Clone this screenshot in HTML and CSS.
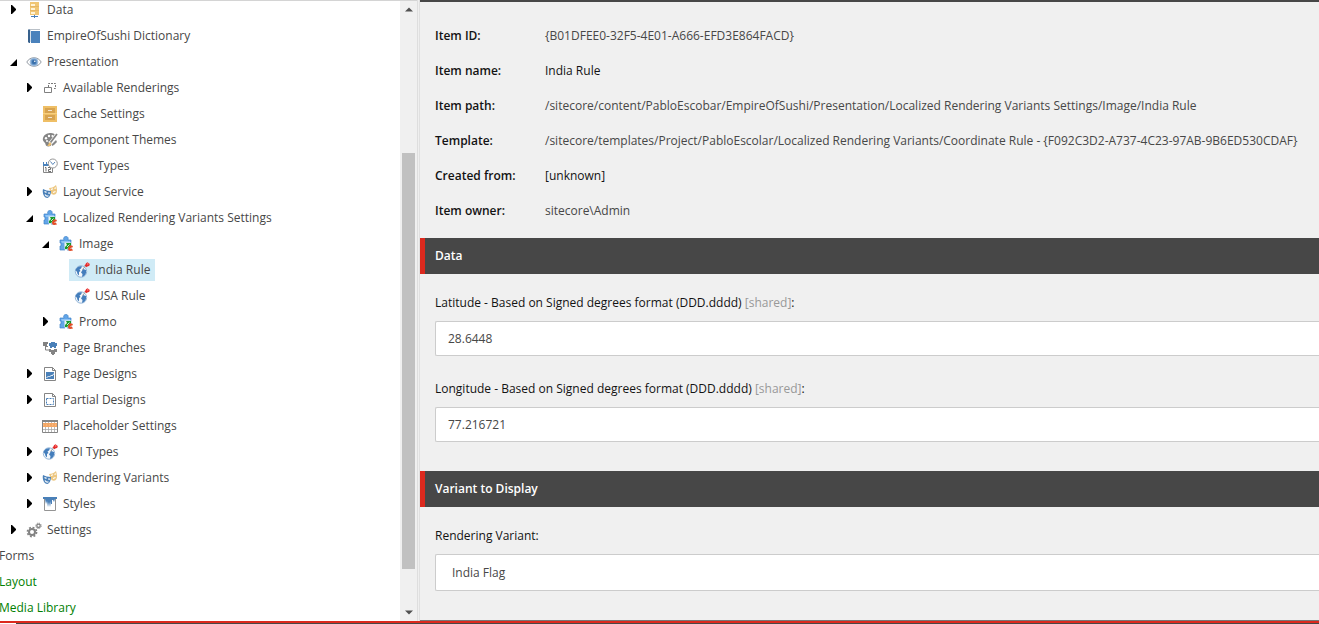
FILE: index.html
```html
<!DOCTYPE html>
<html lang="en">
<head>
<meta charset="utf-8">
<title>Content Editor</title>
<link rel="stylesheet" href="styles.css">
</head>
<body>
<svg class="sprites" width="0" height="0">
  <symbol id="closed" viewBox="0 0 8 10"><path d="M2 0h1l4 4v1L3 9H2z" fill="#000"/></symbol>
  <symbol id="open" viewBox="0 0 8 10"><path d="M8 2v7H1z" fill="#000"/></symbol>
  <symbol id="data" viewBox="0 0 16 16"><path d="M4 0h9v13H4z" fill="#f0c674"/><path d="M5 2h4v2H5zM5 6h4v2H5zM5 10h4v2H5z" fill="#fff3d6"/><path d="M4 4.500h9M4 8.500h9" stroke="#e6b765"/><path d="M8 13h1v1h3v1H9v1H8v-1H5v-1h3z" fill="#4a80b8"/></symbol>
  <symbol id="book" viewBox="0 0 16 16"><path d="M3.500 1.500h10.500" stroke="#b9c0c7"/><path d="M5 3h9v12H5z" fill="#4a82bc"/><path d="M2 2l1-1 1 1v13H3l-1-1z" fill="#38618d"/><path d="M4.500 2v12" stroke="#d5e0eb"/></symbol>
  <symbol id="eye" viewBox="0 0 16 16"><path d="M.8 8C4 2.300 12 2.300 15.200 8 12 13.700 4 13.700 .8 8z" fill="#fff" stroke="#949ba3" stroke-width="1"/><circle cx="8" cy="8" r="3.900" fill="#6c9bcd" stroke="#a6c1de"/><circle cx="8" cy="8" r="2.200" fill="#3c71ab"/><circle cx="8.800" cy="7.200" r=".8" fill="#fff"/></symbol>
  <symbol id="rend" viewBox="0 0 16 16"><path d="M6.500 7V3.500H13.500v5H11" fill="none" stroke="#777" stroke-dasharray="2 1"/><path d="M2.500 7.500h7v5h-7z" fill="#fff" stroke="#808080"/></symbol>
  <symbol id="cabinet" viewBox="0 0 16 16"><path d="M1 0h14v16H1z" fill="#efbf66"/><path d="M3 2h10v5H3zM3 9h10v5H3z" fill="#d7a350"/><path d="M1 7.500h14" stroke="#f8cf7d"/><path d="M6 4h4v1H6zM6 11h4v1H6z" fill="#f3e5cf"/></symbol>
  <symbol id="palette" viewBox="0 0 16 16"><path d="M1 6C2 2 6 1 9 1c4 0 5 3 4 5L9.500 9c-1 2 1 4-1 5-3 1-5 0-5-2C3 10 0 9 1 6z" fill="#858585"/><g fill="#fff"><circle cx="4" cy="6.200" r="1.200"/><circle cx="7" cy="4" r="1.200"/><circle cx="10.500" cy="4" r="1.100"/><circle cx="5" cy="9" r="1"/></g><path d="M15 2L9 10l-2 1" fill="none" stroke="#fff" stroke-width="3"/><path d="M15 2L8.500 10.500" stroke="#858585" stroke-width="1.800"/><path d="M8 10l1.500 2L8 14H5c2-1 1-3 3-4z" fill="#e9bd70"/><path d="M10 12l4-4 1 2-3 3-2 1z" fill="#888"/></symbol>
  <symbol id="event" viewBox="0 0 16 16"><path d="M1.500 6.500h9v8h-9z" fill="#fff" stroke="#858585"/><path d="M1 4h1v2h2V4h1v2h3v2H1z" fill="#4a82bc"/><path d="M3 9.500h1v4M6 9.500h2.500v2H6.500v2H9" fill="none" stroke="#707070"/><circle cx="10.800" cy="5.500" r="4.500" fill="#fff" stroke="#969696"/><path d="M8.500 3.500l2.300 3L13 4" fill="none" stroke="#5c88b8"/></symbol>
  <symbol id="masks" viewBox="0 0 16 16"><path d="M7 4c3 0 5-1 7-3 1 3 1.500 6 .5 8-1 2-3 2-5 1z" fill="#edc780"/><path d="M9 5.500l2-.7M12.500 4.500l1.500-.7M11 8.500l2.500-1" stroke="#fff" stroke-width="1.200"/><path d="M1 5c2 1 5 2 8 2 0 3-1 6-3.500 7C2 14 0 9 1 5z" fill="#4a80b8"/><path d="M2.500 7.500l2 .9M6 9l2 .2M3 10.500c1 1.500 2 2 3.500 1.300" fill="none" stroke="#fff" stroke-width="1.200"/></symbol>
  <symbol id="puzzle" viewBox="0 0 16 16"><path d="M2 4h4c-1-2 0-3.500 2-3.500S10.500 2 10 4h3v10H9v-3H7v3H2v-4h1V7H2z" fill="#62a5e8" stroke="#4185ca" stroke-width=".7"/><path d="M3 5h9v2H4z" fill="#8fc4f5"/><path d="M6.500 6.500h7v7h-7z" fill="#eef6ec"/><path d="M7 13v-2l2-2-1-2h5v5l-1.500-1.500L9 13z" fill="#169b2b"/><path d="M10 13c0-2 1-3 2-3l-.5-1L15 10l-1 2-.7-.7-1 1.700h1.200v-1l1.500 2.500L12 15l-1.500-.5z" fill="#e44c25"/><path d="M9 11l2.500-2.500" stroke="#fff" stroke-width=".8"/></symbol>
  <symbol id="globe" viewBox="0 0 16 16"><circle cx="7" cy="9.500" r="5.700" fill="#f3f7fb" stroke="#7ca4ce" stroke-width=".8"/><path d="M1.500 8C3 4.500 6 4 8 4.500L7 6.500 5.500 7.500 6.500 9 5 10v3.500L3.500 12 3 10zM9 7l3 1v3c-.5 2-2 3-4 4l.5-3L7 10.500z" fill="#447ebc"/><path d="M8.500 7.500l3.500-4" stroke="#999"/><path d="M10.300 3.300l1.200-.8.5-1.300L13.500.3 15.800 2l-.6 2-1.500.3-1 1z" fill="#e52b2b"/><circle cx="13.800" cy="2" r=".7" fill="#ff9b94"/></symbol>
  <symbol id="branches" viewBox="0 0 16 16"><path d="M1 2h5v2H5v2h1v1H3V6H1z" fill="#828282"/><path d="M7 3h2V2h4v1h2v3h-1v2h-2V7h-2v1H8V6H7z" fill="#4a80b8"/><path d="M3.500 7v3H7" fill="none" stroke="#828282"/><path d="M7 9h2v1h3V9h3v3h-2v2h-1v1h-2v-1H9v-2H7z" fill="#848484"/></symbol>
  <symbol id="page" viewBox="0 0 16 16"><path d="M2.500 1.500h8l3 3v10h-11z" fill="#fff" stroke="#858585"/><path d="M10.500 1.500v3h3" fill="none" stroke="#858585"/></symbol>
  <symbol id="design" viewBox="0 0 16 16"><use href="#page"/><path d="M4 6h8v7H4z" fill="#4a80b8"/><path d="M4.500 12l2-2 1 1 2-2 .5 1L12 7.500" fill="none" stroke="#fff" stroke-width=".9"/></symbol>
  <symbol id="partial" viewBox="0 0 16 16"><use href="#page"/><path d="M4.500 6.500h7v6h-7z" fill="none" stroke="#4a80b8" stroke-dasharray="2 1"/></symbol>
  <symbol id="grid" viewBox="0 0 16 16"><path d="M.5 2.500h15v12H.5z" fill="#fff" stroke="#858585"/><path d="M0 2h16v2H0z" fill="#858585"/><path d="M3.500 4v10M6.500 4v10M9.500 4v10M12.500 4v10M1 11.500h14" stroke="#aaa" stroke-width=".8"/><path d="M1 5h14v4H1z" fill="#f4a765"/><path d="M1 7h14" stroke="#f8c496" stroke-dasharray="1 2"/></symbol>
  <symbol id="styles" viewBox="0 0 16 16"><path d="M2.500 3v11.500h11V3" fill="#fff" stroke="#949494"/><path d="M1 1h14v2h-2l-1 3-1-2h-1v4H9V5L8 11 7 6 6 11 5 5 4 8 3 3H1z" fill="#4a80b8"/></symbol>
  <symbol id="gears" viewBox="0 0 16 16"><circle cx="6" cy="10" r="3" fill="none" stroke="#828282" stroke-width="2"/><circle cx="6" cy="10" r="4.600" fill="none" stroke="#828282" stroke-width="1.600" stroke-dasharray="1.900 1.713"/><circle cx="12.500" cy="3.800" r="1.700" fill="none" stroke="#828282" stroke-width="1.300"/><circle cx="12.500" cy="3.800" r="2.700" fill="none" stroke="#828282" stroke-dasharray="1.120 1"/></symbol>
</svg>
<div class="app">
  <main class="workspace">
    <nav class="tree">
      <div class="node l0"><svg class="arrow"><use href="#closed"/></svg><span class="item"><svg class="icon"><use href="#data"/></svg>Data</span></div>
      <div class="node l0"><i class="arrow"></i><span class="item"><svg class="icon"><use href="#book"/></svg>EmpireOfSushi Dictionary</span></div>
      <div class="node l0"><svg class="arrow"><use href="#open"/></svg><span class="item"><svg class="icon"><use href="#eye"/></svg>Presentation</span></div>
      <div class="node l1"><svg class="arrow"><use href="#closed"/></svg><span class="item"><svg class="icon"><use href="#rend"/></svg>Available Renderings</span></div>
      <div class="node l1"><i class="arrow"></i><span class="item"><svg class="icon"><use href="#cabinet"/></svg>Cache Settings</span></div>
      <div class="node l1"><i class="arrow"></i><span class="item"><svg class="icon"><use href="#palette"/></svg>Component Themes</span></div>
      <div class="node l1"><i class="arrow"></i><span class="item"><svg class="icon"><use href="#event"/></svg>Event Types</span></div>
      <div class="node l1"><svg class="arrow"><use href="#closed"/></svg><span class="item"><svg class="icon"><use href="#masks"/></svg>Layout Service</span></div>
      <div class="node l1"><svg class="arrow"><use href="#open"/></svg><span class="item"><svg class="icon"><use href="#puzzle"/></svg>Localized Rendering Variants Settings</span></div>
      <div class="node l2"><svg class="arrow"><use href="#open"/></svg><span class="item"><svg class="icon"><use href="#puzzle"/></svg>Image</span></div>
      <div class="node l3"><i class="arrow"></i><span class="item selected"><svg class="icon"><use href="#globe"/></svg>India Rule</span></div>
      <div class="node l3"><i class="arrow"></i><span class="item"><svg class="icon"><use href="#globe"/></svg>USA Rule</span></div>
      <div class="node l2"><svg class="arrow"><use href="#closed"/></svg><span class="item"><svg class="icon"><use href="#puzzle"/></svg>Promo</span></div>
      <div class="node l1"><i class="arrow"></i><span class="item"><svg class="icon"><use href="#branches"/></svg>Page Branches</span></div>
      <div class="node l1"><svg class="arrow"><use href="#closed"/></svg><span class="item"><svg class="icon"><use href="#design"/></svg>Page Designs</span></div>
      <div class="node l1"><svg class="arrow"><use href="#closed"/></svg><span class="item"><svg class="icon"><use href="#partial"/></svg>Partial Designs</span></div>
      <div class="node l1"><i class="arrow"></i><span class="item"><svg class="icon"><use href="#grid"/></svg>Placeholder Settings</span></div>
      <div class="node l1"><svg class="arrow"><use href="#closed"/></svg><span class="item"><svg class="icon"><use href="#globe"/></svg>POI Types</span></div>
      <div class="node l1"><svg class="arrow"><use href="#closed"/></svg><span class="item"><svg class="icon"><use href="#masks"/></svg>Rendering Variants</span></div>
      <div class="node l1"><svg class="arrow"><use href="#closed"/></svg><span class="item"><svg class="icon"><use href="#styles"/></svg>Styles</span></div>
      <div class="node l0"><svg class="arrow"><use href="#closed"/></svg><span class="item"><svg class="icon"><use href="#gears"/></svg>Settings</span></div>
      <div class="node root">Forms</div>
      <div class="node root green">Layout</div>
      <div class="node root green">Media Library</div>
    </nav>
    <div class="scrollbar">
      <svg class="step" viewBox="0 0 16 16"><path d="M4 10h8L8 6z" fill="#505050"/></svg>
      <div class="track"><div class="thumb"></div></div>
      <svg class="step" viewBox="0 0 16 16"><path d="M4 6h8l-4 4z" fill="#505050"/></svg>
    </div>
    <div class="splitter"></div>
    <section class="editor">
      <dl class="info">
        <dt>Item ID:</dt><dd>{B01DFEE0-32F5-4E01-A666-EFD3E864FACD}</dd>
        <dt>Item name:</dt><dd class="dark">India Rule</dd>
        <dt>Item path:</dt><dd>/sitecore/content/PabloEscobar/EmpireOfSushi/Presentation/Localized Rendering Variants Settings/Image/India Rule</dd>
        <dt>Template:</dt><dd>/sitecore/templates/Project/PabloEscolar/Localized Rendering Variants/Coordinate Rule - {F092C3D2-A737-4C23-97AB-9B6ED530CDAF}</dd>
        <dt>Created from:</dt><dd class="dark">[unknown]</dd>
        <dt>Item owner:</dt><dd>sitecore\Admin</dd>
      </dl>
      <h2 class="heading">Data</h2>
      <div class="fields">
        <div class="label">Latitude - Based on Signed degrees format (DDD.dddd) <span class="shared">[shared]</span>:</div>
        <div class="input">28.6448</div>
        <div class="label">Longitude - Based on Signed degrees format (DDD.dddd) <span class="shared">[shared]</span>:</div>
        <div class="input">77.216721</div>
      </div>
      <h2 class="heading">Variant to Display</h2>
      <div class="fields">
        <div class="label">Rendering Variant:</div>
        <div class="input select">India Flag</div>
      </div>
    </section>
  </main>
  <footer class="footer"><span class="notch"></span><span class="edge"></span></footer>
</div>
</body>
</html>
```
FILE: styles.css
```css
* { box-sizing: border-box; }
body { margin: 0; font: 12px/16px "Open Sans", sans-serif; color: #474747; background: #fff; overflow: hidden; }
.sprites { display: block; }
.app { width: 1319px; height: 624px; display: flex; flex-direction: column; overflow: hidden; }
.workspace { display: flex; height: 621px; flex: none; }
.tree { width: 400px; flex: none; overflow: hidden; border-top: 1px solid #d4d4d4; display: flex; flex-direction: column; }
.tree .node:first-child { margin-top: -4px; }
.node { height: 26px; flex: none; display: flex; align-items: center; white-space: nowrap; }
.arrow { width: 8px; height: 10px; flex: none; }
.item { display: flex; align-items: center; height: 22px; padding: 0 4px; margin-left: 5px; }
.selected { background: #d0ebf6; }
.icon { width: 16px; height: 16px; margin-right: 5px; flex: none; }
.l0 { padding-left: 9px; }
.l1 { padding-left: 25px; }
.l2 { padding-left: 41px; }
.l3 { padding-left: 57px; }
.l3 .item { margin-left: 4px; padding: 0 5px; }
.root { margin-left: -1px; }
.green { color: #008000; }
.scrollbar { width: 17px; flex: none; background: #f0f0f0; border-top: 1px solid #d4d4d4; display: flex; flex-direction: column; align-items: center; }
.step { width: 16px; height: 17px; flex: none; }
.track { flex: 1; width: 13px; padding-top: 135px; }
.thumb { height: 416px; background: #c1c1c1; }
.splitter { width: 3px; flex: none; background: #efefef; border-left: 1px solid #dedede; border-right: 1px solid #e0e0e0; }
.editor { flex: 1; min-width: 0; background: #f0f0f0; border-top: 2px solid #474747; border-bottom: 1px solid #777; overflow: hidden; }
.info { margin: 0; padding: 16px 0 0 15px; height: 236px; display: grid; grid-template-columns: 110px 1fr; grid-auto-rows: 35px; align-items: center; white-space: nowrap; }
.info dt { color: #131313; font-weight: 600; }
.info dd { margin: 0; }
.info .dark { color: #131313; }
.heading { margin: 0; height: 36px; border-left: 5px solid #dc291e; padding-left: 10px; background: #474747; color: #fff; font-size: 12px; line-height: 36px; font-weight: 600; }
.fields { padding: 21px 0 0 15px; height: 197px; }
.label { color: #131313; margin-bottom: 10px; }
.shared { color: #999; }
.input { height: 35px; margin-bottom: 25px; padding: 0 12px; line-height: 33px; background: #fff; border: 1px solid #ccc; border-right: 0; border-radius: 2px 0 0 2px; }
.select { height: 37px; line-height: 35px; padding-left: 16px; }
.footer { height: 3px; flex: none; background: #dc291e; display: flex; align-items: flex-end; }
.notch { width: 16px; height: 1px; background: #fff; }
.edge { flex: 1; height: 1px; background: #474747; }
```
